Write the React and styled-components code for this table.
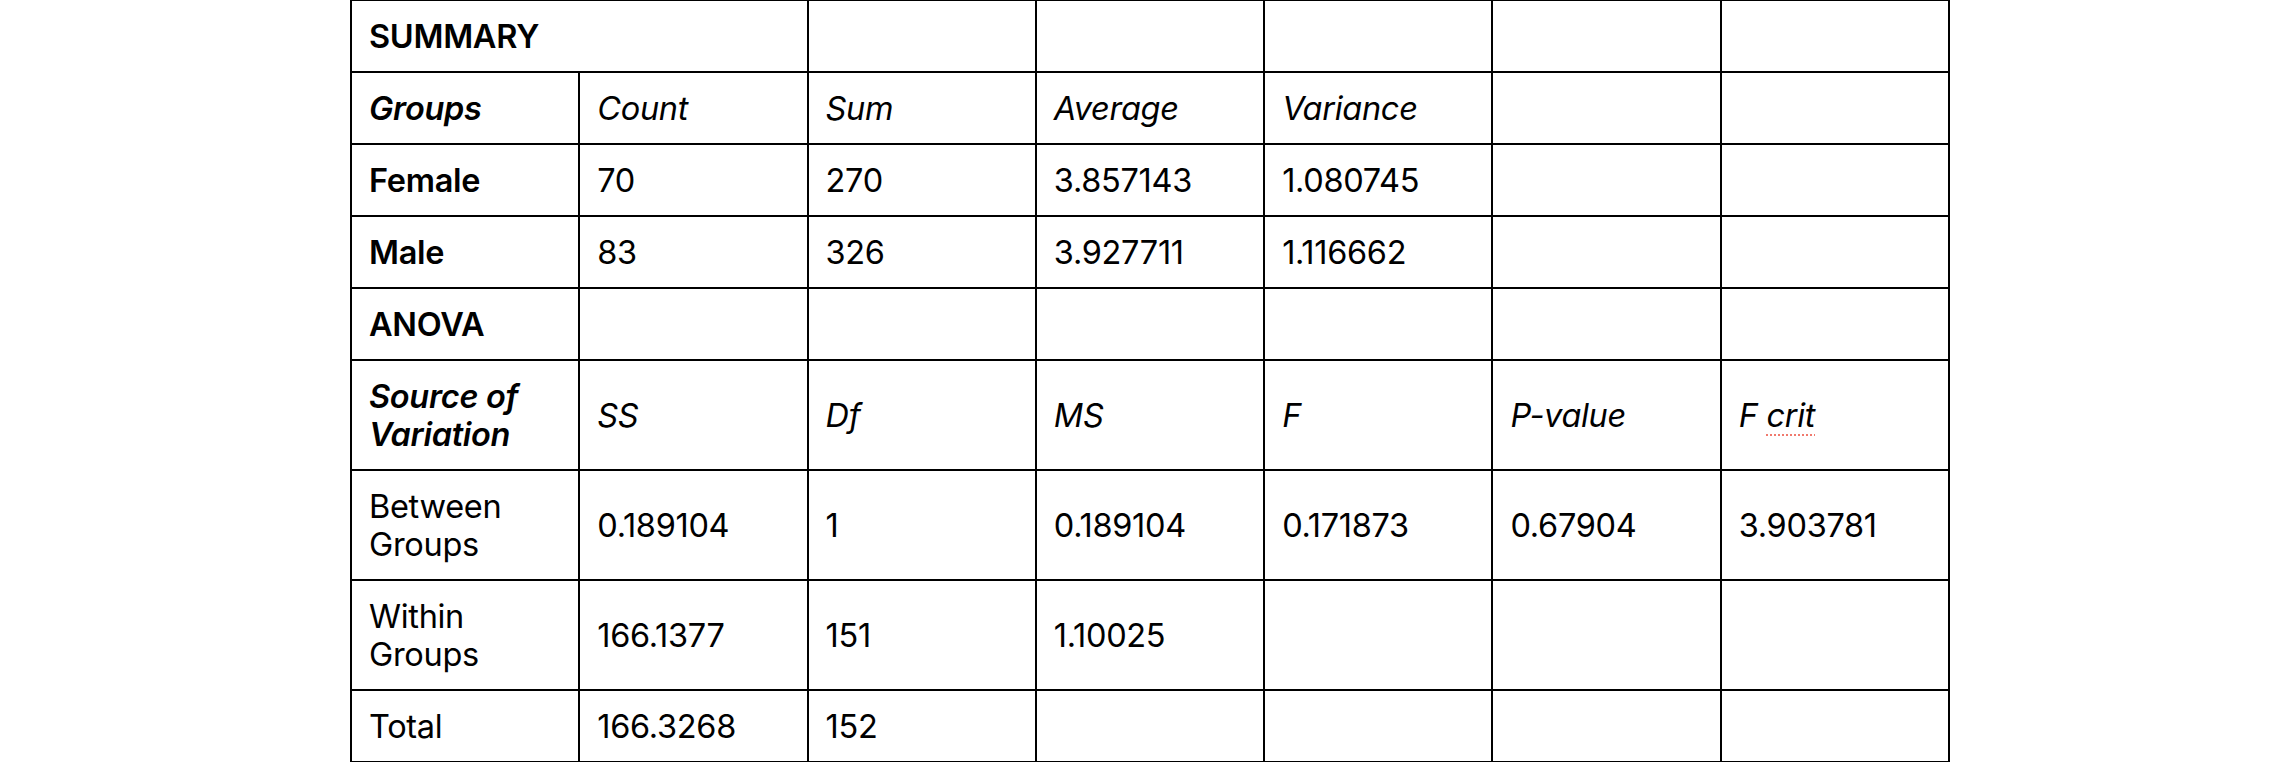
import React from "react";
import styled, { createGlobalStyle } from "styled-components";

const GlobalStyle = createGlobalStyle`
  html, body {
    margin: 0;
    padding: 0;
    background: #fff;
  }
  body {
    font-family: Inter, "Noto Sans", "Liberation Sans", sans-serif;
    color: #000;
  }
`;

const Page = styled.div`
  padding-left: 350px;
  margin-top: -1px;
`;

const Table = styled.table`
  border-collapse: collapse;
  table-layout: fixed;
  width: 1600px;
`;

const Cell = styled.td`
  border: 2px solid #000;
  padding: 17px 17px 15px;
  font-size: 32.5px;
  line-height: 38px;
  vertical-align: middle;
  font-weight: ${p => (p.$bold ? 600 : 400)};
  font-style: ${p => (p.$italic ? "italic" : "normal")};
  letter-spacing: -0.3px;
`;

const Misspelled = styled.span`
  text-decoration-line: underline;
  text-decoration-style: dotted;
  text-decoration-color: #f07a6e;
  text-decoration-thickness: 2px;
  text-underline-offset: 7px;
`;

const rows = [
  [{ t: "SUMMARY", b: true, span: 2 }, "", "", "", "", ""],
  [{ t: "Groups", b: true, i: true }, { t: "Count", i: true }, { t: "Sum", i: true }, { t: "Average", i: true }, { t: "Variance", i: true }, "", ""],
  [{ t: "Female", b: true }, "70", "270", "3.857143", "1.080745", "", ""],
  [{ t: "Male", b: true }, "83", "326", "3.927711", "1.116662", "", ""],
  [{ t: "ANOVA", b: true }, "", "", "", "", "", ""],
  [
    { t: <>Source of<br />Variation</>, b: true, i: true },
    { t: "SS", i: true },
    { t: "Df", i: true },
    { t: "MS", i: true },
    { t: "F", i: true },
    { t: "P-value", i: true },
    { t: <>F <Misspelled>crit</Misspelled></>, i: true },
  ],
  [{ t: <>Between<br />Groups</> }, "0.189104", "1", "0.189104", "0.171873", "0.67904", "3.903781"],
  [{ t: <>Within<br />Groups</> }, "166.1377", "151", "1.10025", "", "", ""],
  ["Total", "166.3268", "152", "", "", "", ""],
];

export default function App() {
  return (
    <>
      <GlobalStyle />
      <Page>
        <Table>
          <tbody>
            {rows.map((row, r) => (
              <tr key={r}>
                {row.map((c, i) => {
                  const cell = typeof c === "string" ? { t: c } : c;
                  return (
                    <Cell key={i} colSpan={cell.span || 1} $bold={cell.b} $italic={cell.i}>
                      {cell.t || "\u00a0"}
                    </Cell>
                  );
                })}
              </tr>
            ))}
          </tbody>
        </Table>
      </Page>
    </>
  );
}
